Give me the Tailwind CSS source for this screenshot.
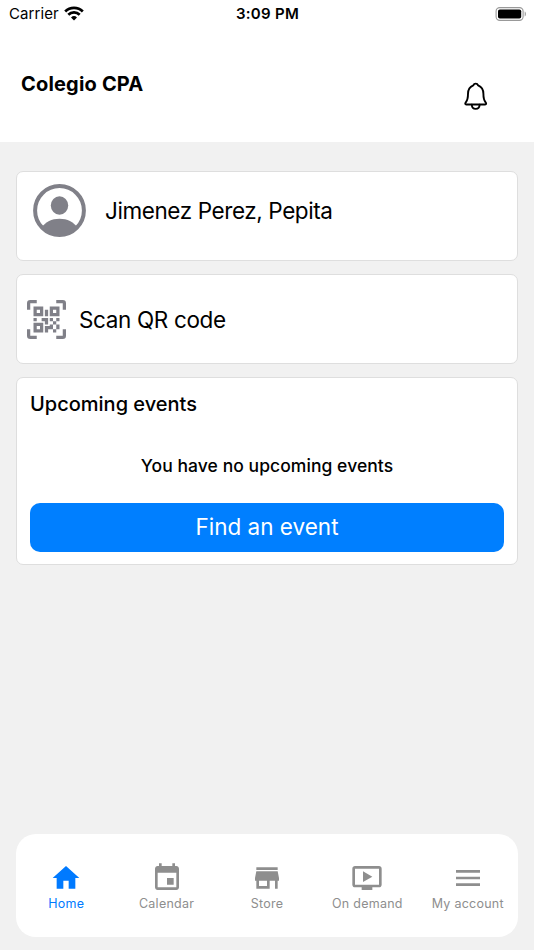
<!DOCTYPE html>
<html lang="en">
<head>
    <meta charset="UTF-8">
    <meta name="viewport" content="width=device-width, initial-scale=1.0">
    <title>Colegio CPA</title>
    <script src="https://cdn.jsdelivr.net/npm/@tailwindcss/browser@4"></script>
</head>
<body class="bg-[#f1f1f1] font-['Inter',sans-serif] text-black">
    <div class="w-[534px] h-[950px] flex flex-col overflow-hidden">
        <header class="h-[142px] bg-white shrink-0">
            <!-- Status bar -->
            <div class="h-7 grid grid-cols-3 items-center pl-[9px] pr-[7px]">
                <div class="flex items-center gap-[5px]">
                    <span class="text-[15px] tracking-[0.1px]">Carrier</span>
                    <svg class="w-[20px] h-[15px] mb-[2px]" viewBox="0 0 20 15" fill="none" stroke="#000" stroke-width="2.7">
                        <path d="M1.2 5.5a12.4 12.4 0 0 1 17.6 0"/>
                        <path d="M4.3 8.8a8 8 0 0 1 11.4 0"/>
                        <path d="M10 14.5l-3-3a4.3 4.3 0 0 1 6 0z" fill="#000" stroke="none"/>
                    </svg>
                </div>
                <span class="text-[15px] font-semibold text-center tracking-[0.3px] -ml-px">3:09 PM</span>
                <svg class="w-[32px] h-[14px] justify-self-end mb-px" viewBox="0 0 32 14">
                    <rect x="1.1" y="0.6" width="27" height="12.8" rx="3.6" fill="none" stroke="#999" stroke-width="1.1"/>
                    <rect x="3" y="2.5" width="23.2" height="9" rx="1.8"/>
                    <path d="M29.7 4.6c1.6.6 1.6 4.2 0 4.8z" fill="#999"/>
                </svg>
            </div>
            <div class="flex justify-between pl-[21px] pr-[44px] pt-[42px]">
                <h1 class="text-[20px] leading-7 font-bold tracking-[0.18px]">Colegio CPA</h1>
                <svg class="w-[28px] h-[30px] mt-[11px]" viewBox="0 0 28 30" fill="none" stroke="#000" stroke-width="1.9" stroke-linejoin="round" stroke-linecap="round">
                    <path d="M13.7 2.6c-1.3 0-2 .7-2.4 1.7-3.5 1.4-5.3 4.4-5.3 8.4 0 5.2-.7 6.8-2.2 8.6-.9 1.3-.7 2.2.5 2.2h18.8c1.2 0 1.4-.9.5-2.2-1.5-1.8-2.2-3.4-2.2-8.6 0-4-1.8-7-5.300-8.400-.4-1-1.100-1.700-2.400-1.700z"/>
                    <path d="M9.8 23.7c.1 2.7 1.6 4.2 3.9 4.2s3.8-1.5 3.9-4.2"/>
                </svg>
            </div>
        </header>

        <main class="flex-1 px-4 pt-[29px] flex flex-col gap-[13px]">
            <div class="h-[90px] bg-white border border-[#dedede] rounded-[7px] flex items-start pl-[16px] pt-[12px]">
                <svg class="w-[54px] h-[54px]" viewBox="0 0 54 54" fill="#808088">
                    <circle cx="26.5" cy="26.5" r="24.4" fill="none" stroke="#808088" stroke-width="4"/>
                    <ellipse cx="26.5" cy="21.5" rx="8.7" ry="9.3"/>
                    <path d="M9 43c3.5-5 9.5-8.3 17.5-8.3S40.5 38 44 43a24.4 24.4 0 0 1-35 0z"/>
                </svg>
                <span class="text-[22.5px] leading-[28px] tracking-[-0.41px] ml-[18px] mt-[13px]">Jimenez Perez, Pepita</span>
            </div>

            <div class="h-[90px] bg-white border border-[#dedede] rounded-[7px] flex items-center pl-[10px]">
                <svg class="w-[39px] h-[39px]" viewBox="0 0 24 24" fill="#808088">
                    <path d="M4,4H10V10H4V4M20,4V10H14V4H20M14,15H16V13H14V11H16V13H18V11H20V13H18V15H20V18H18V20H16V18H13V20H11V16H14V15M16,15V18H18V15H16M4,20V14H10V20H4M6,6V8H8V6H6M16,6V8H18V6H16M6,16V18H8V16H6M4,11H6V13H4V11M9,11H13V15H11V13H9V11M11,6H13V10H11V6M2,2V6H0V2A2,2 0 0,1 2,0H6V2H2M22,0A2,2 0 0,1 24,2V6H22V2H18V0H22M2,18V22H6V24H2A2,2 0 0,1 0,22V18H2M22,22V18H24V22A2,2 0 0,1 22,24H18V22H22Z"/>
                </svg>
                <span class="text-[22.5px] leading-[28px] tracking-[-0.36px] ml-[13px] mt-px">Scan QR code</span>
            </div>

            <div class="h-[188px] bg-white border border-[#dedede] rounded-[7px] px-[13px] pt-[12px] flex flex-col">
                <h2 class="text-[20px] leading-7 font-medium">Upcoming events</h2>
                <p class="text-[17.5px] leading-6 font-medium text-center tracking-[0.06px] mt-[36px]">You have no upcoming events</p>
                <button class="h-[49px] mt-[25px] pb-[2px] bg-[#007fff] text-white text-[22.5px] rounded-[10px]">Find an event</button>
            </div>
        </main>

        <nav class="mx-4 mb-[13px] h-[103.5px] shrink-0 bg-white rounded-[20px] grid grid-cols-5 text-[12.5px] text-[#8e8e8e]">
            <a class="flex flex-col items-center pt-[28px] text-[#007aff]">
                <svg class="w-8 h-8" viewBox="0 0 24 24" fill="currentColor"><path d="M10 20v-6h4v6h5v-8h3L12 3 2 12h3v8z"/></svg>
                <span class="leading-[20px] tracking-[0.25px]">Home</span>
            </a>
            <a class="flex flex-col items-center pt-[28px]">
                <svg class="w-8 h-8" viewBox="0 0 24 24" fill="currentColor"><path d="M17 12h-5v5h5v-5zM16 1v2H8V1H6v2H5c-1.11 0-1.99.9-1.99 2L3 19c0 1.1.89 2 2 2h14c1.1 0 2-.9 2-2V5c0-1.1-.9-2-2-2h-1V1h-2zm3 18H5V8h14v11z"/></svg>
                <span class="leading-[20px] tracking-[0.25px]">Calendar</span>
            </a>
            <a class="flex flex-col items-center pt-[28px]">
                <svg class="w-8 h-8" viewBox="0 0 24 24" fill="currentColor"><path d="M20 4H4v2h16V4zm1 10v-2l-1-5H4l-1 5v2h1v6h10v-6h4v6h2v-6h1zm-9 4H6v-4h6v4z"/></svg>
                <span class="leading-[20px] tracking-[0.25px]">Store</span>
            </a>
            <a class="flex flex-col items-center pt-[28px]">
                <svg class="w-8 h-8" viewBox="0 0 24 24" fill="currentColor"><path d="M21 3H3c-1.11 0-2 .89-2 2v12c0 1.1.89 2 2 2h5v2h8v-2h5c1.1 0 1.99-.9 1.99-2L23 5c0-1.11-.9-2-2-2zm0 14H3V5h18v12zm-5-6l-7 4V7z"/></svg>
                <span class="leading-[20px] tracking-[0.25px]">On demand</span>
            </a>
            <a class="flex flex-col items-center pt-[28px]">
                <svg class="w-8 h-8" viewBox="0 0 24 24" fill="currentColor"><path d="M3 18h18v-2H3v2zm0-5h18v-2H3v2zm0-7v2h18V6H3z"/></svg>
                <span class="leading-[20px] tracking-[0.25px]">My account</span>
            </a>
        </nav>
    </div>
</body>
</html>
